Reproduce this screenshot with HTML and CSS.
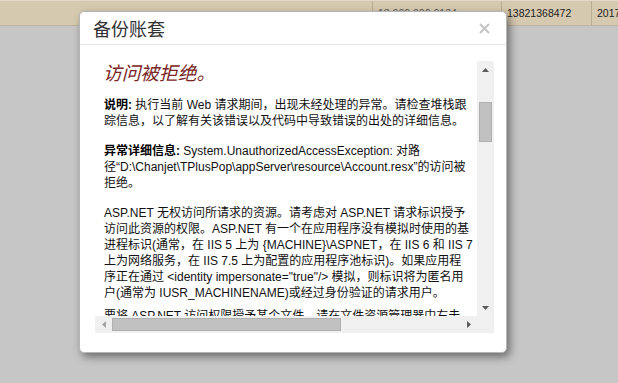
FILE: index.html
```html
<!DOCTYPE html>
<html>
<head>
<meta charset="utf-8">
<link rel="stylesheet" href="styles.css">
</head>
<body>
<div class="page">
  <div class="bar">
    <div class="cell c1"></div>
    <div class="cell c2">13 000 000 0134</div>
    <div class="cell c3">13821368472</div>
    <div class="cell c4">2017</div>
  </div>
  <div class="backdrop"></div>
</div>

<div class="modal">
  <div class="modal-header">
    <span class="modal-title">备份账套</span>
    <svg class="close" width="11" height="11" viewBox="0 0 11 11"><path d="M1 1L10 10M10 1L1 10" stroke="#c3c3c3" stroke-width="2" fill="none"/></svg>
  </div>
  <div class="modal-body">
    <div class="frame">
      <div class="viewport">
        <h2 class="err-title">访问被拒绝。</h2>
        <p class="para"><b>说明:</b> 执行当前 Web 请求期间，出现未经处理的异常。请检查堆栈跟<br>踪信息，以了解有关该错误以及代码中导致错误的出处的详细信息。</p>
        <p class="para"><b>异常详细信息:</b> System.UnauthorizedAccessException: 对路<br>径“D:\Chanjet\TPlusPop\appServer\resource\Account.resx”的访问被<br>拒绝。</p>
        <p class="para tight">ASP.NET 无权访问所请求的资源。请考虑对 ASP.NET 请求标识授予<br>访问此资源的权限。ASP.NET 有一个在应用程序没有模拟时使用的基<br>进程标识(通常，在 IIS 5 上为 {MACHINE}\ASPNET，在 IIS 6 和 IIS 7<br>上为网络服务，在 IIS 7.5 上为配置的应用程序池标识)。如果应用程<br>序正在通过 &lt;identity impersonate="true"/&gt; 模拟，则标识将为匿名用<br>户(通常为 IUSR_MACHINENAME)或经过身份验证的请求用户。</p>
        <p class="para">要将 ASP.NET 访问权限授予某个文件，请在文件资源管理器中右击<br>该文件，选择“属性”，然后选择“安全”选项卡。</p>
      </div>
      <div class="vscroll">
        <div class="sbtn"><svg width="7" height="4" viewBox="0 0 7 4"><path d="M3.5 0L7 4H0Z" fill="#5a5a5a"/></svg></div>
        <div class="vtrack"><div class="vthumb"></div></div>
        <div class="sbtn"><svg width="7" height="4" viewBox="0 0 7 4"><path d="M0 0H7L3.5 4Z" fill="#5a5a5a"/></svg></div>
      </div>
      <div class="hscroll">
        <div class="sbtn"><svg width="4" height="7" viewBox="0 0 4 7"><path d="M4 0V7L0 3.5Z" fill="#a3a3a3"/></svg></div>
        <div class="htrack"><div class="hthumb"></div></div>
        <div class="sbtn"><svg width="4" height="7" viewBox="0 0 4 7"><path d="M0 0L4 3.5L0 7Z" fill="#5a5a5a"/></svg></div>
      </div>
      <div class="corner"></div>
    </div>
  </div>
</div>
</body>
</html>
```

FILE: styles.css
```css
html, body {
  margin: 0;
  padding: 0;
}
body {
  width: 618px;
  height: 383px;
  overflow: hidden;
  background: #c6c6c6;
  font-family: "Liberation Sans", "Noto Sans CJK SC", sans-serif;
  position: relative;
}
.page {
  display: flex;
  flex-direction: column;
  height: 383px;
}
.bar {
  height: 24px;
  background: #d5c9af;
  border-top: 1px solid #e2d9c6;
  border-bottom: 1px solid #bdb29a;
  display: flex;
  font-size: 10.5px;
  color: #222;
}
.cell {
  border-right: 1px solid #b9ad94;
  display: flex;
  align-items: center;
  padding-left: 5px;
  box-sizing: border-box;
  white-space: nowrap;
  overflow: hidden;
}
.c1 { width: 373px; }
.c2 { width: 129px; color: #555; }
.c3 { width: 90px; }
.c4 { flex: 1; border-right: none; }
.backdrop {
  flex: 1;
  background: #c6c6c6;
}

.modal {
  position: absolute;
  left: 79px;
  top: 11px;
  width: 428px;
  height: 342px;
  box-sizing: border-box;
  background: #fff;
  border: 1px solid #b5b5b5;
  border-radius: 5px;
  box-shadow: 3px 4px 9px rgba(0, 0, 0, 0.45);
  display: flex;
  flex-direction: column;
}
.modal-header {
  height: 32px;
  border-bottom: 1px solid #e5e5e5;
  display: flex;
  align-items: center;
  justify-content: space-between;
  padding: 0 16px 0 13px;
}
.modal-title {
  font-family: "Noto Sans CJK SC", sans-serif;
  font-size: 18px;
  color: #333;
  line-height: 32px;
}
.close {
  display: block;
}
.modal-body {
  padding: 16px 12px 0 15px;
}
.frame {
  width: 399px;
  height: 272px;
  display: grid;
  grid-template-columns: 382px 17px;
  grid-template-rows: 255px 17px;
  background: #fff;
}
.viewport {
  overflow: hidden;
  padding: 0 0 0 8px;
  color: #111;
  font-size: 12px;
  line-height: 16px;
}
.err-title {
  margin: 0 0 15px;
  padding: 1px 4px 0 0;
  font-family: "Noto Sans CJK SC", sans-serif;
  font-style: italic;
  font-weight: normal;
  font-size: 18.7px;
  line-height: 20px;
  color: #7a2626;
}
.para {
  margin: 0 0 14px;
  padding-left: 1px;
  white-space: nowrap;
}
.para.tight {
  margin-bottom: 7px;
}
.para b {
  font-weight: bold;
  color: #000;
}
.vscroll {
  background: #f0f0f0;
  display: flex;
  flex-direction: column;
}
.sbtn {
  width: 17px;
  height: 17px;
  display: flex;
  align-items: center;
  justify-content: center;
  flex: none;
}
.vtrack {
  flex: 1;
  padding: 24px 2px 0;
}
.vthumb {
  height: 40px;
  background: #c1c1c1;
  border: 1px solid #b0b0b0;
  box-sizing: border-box;
}
.hscroll {
  background: #f0f0f0;
  display: flex;
}
.htrack {
  flex: 1;
  padding: 2px 0;
}
.hthumb {
  width: 229px;
  height: 13px;
  background: #c1c1c1;
  border: 1px solid #b0b0b0;
  box-sizing: border-box;
}
.corner {
  background: #f0f0f0;
}
```
